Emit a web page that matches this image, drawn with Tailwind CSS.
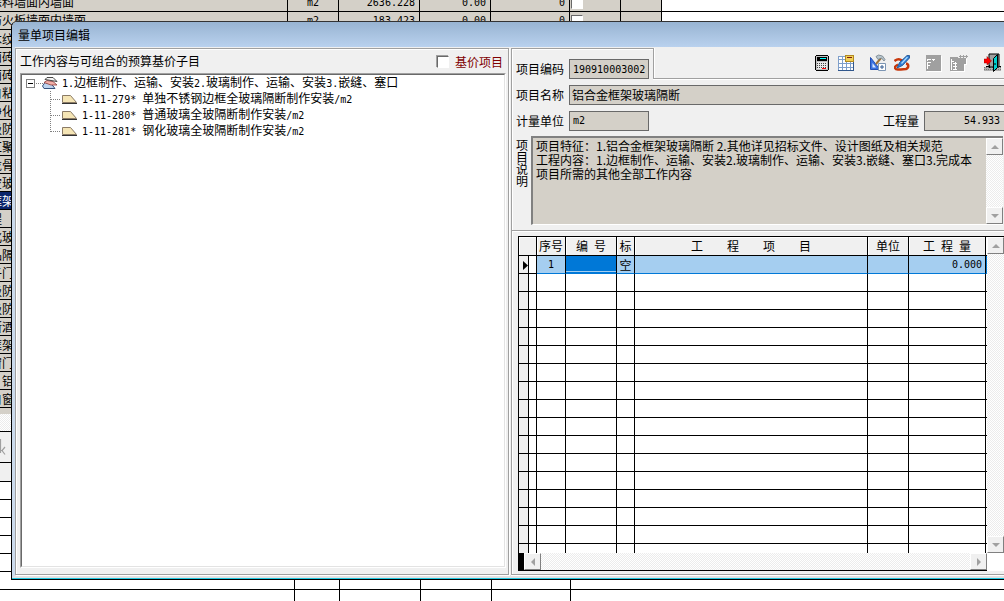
<!DOCTYPE html>
<html lang="zh-CN">
<head>
<meta charset="utf-8">
<title>量单项目编辑</title>
<script src="https://cdn.jsdelivr.net/npm/@tailwindcss/browser@4"></script>
</head>
<body class="relative h-screen overflow-hidden bg-white font-['Noto_Sans_CJK_SC',sans-serif] text-xs leading-4 text-black">

<!-- Main program behind the dialog -->
<main class="h-full overflow-hidden whitespace-nowrap">
  <table class="-mt-1.5 w-full table-fixed border-separate border-spacing-0 [&_td]:h-[18px] [&_td]:border-r [&_td]:border-b [&_td]:border-black [&_td]:bg-[#d4d0c8] [&_td]:p-0 [&_td]:leading-4">
    <colgroup><col class="w-[288px]"><col class="w-[51px]"><col class="w-[81px]"><col class="w-[71px]"><col class="w-[79px]"><col class="w-[51px]"><col class="w-[41px]"><col></colgroup>
    <tbody id="back">
      <tr class="font-['DejaVu_Sans_Mono','Noto_Sans_CJK_SC',monospace]"><td class="-indent-2.5">涂料墙面内墙面</td><td class="text-center text-[10px]">m2</td><td class="text-right text-[10px]"><span class="pr-1">2636.228</span></td><td class="text-right text-[10px]"><span class="pr-1">0.00</span></td><td class="text-right text-[10px]"><span class="pr-1">0</span></td><td><input type="checkbox" aria-label="选择第一行" class="ml-px block size-3 appearance-none border border-white border-t-[#696969] border-l-[#696969] bg-white"></td><td></td><td class="border-r-0! bg-white!"></td></tr>
      <tr class="font-['DejaVu_Sans_Mono','Noto_Sans_CJK_SC',monospace]"><td class="-indent-2.5">防火板墙面内墙面</td><td class="text-center text-[10px]">m2</td><td class="text-right text-[10px]"><span class="pr-1">183.423</span></td><td class="text-right text-[10px]"><span class="pr-1">0.00</span></td><td class="text-right text-[10px]"><span class="pr-1">0</span></td><td><input type="checkbox" aria-label="选择第二行" class="ml-px block size-3 appearance-none border border-white border-t-[#696969] border-l-[#696969] bg-white"></td><td></td><td class="border-r-0! bg-white!"></td></tr>
      <tr><td class="-indent-2.5">木纹</td></tr>
      <tr><td class="-indent-2.5">面砖</td></tr>
      <tr><td class="-indent-2.5">面砖</td></tr>
      <tr><td class="-indent-2.5">自粘</td></tr>
      <tr><td class="-indent-2.5">净化</td></tr>
      <tr><td class="-indent-2.5">级防</td></tr>
      <tr><td class="-indent-2.5">汇聚</td></tr>
      <tr><td class="-indent-2.5">龙骨</td></tr>
      <tr><td class="-indent-2.5">空玻璃</td></tr>
      <tr><td class="bg-[#0a246a]! -indent-2.5 text-white">框架</td></tr>
      <tr><td class="-indent-2.5">程</td></tr>
      <tr><td class="-indent-2.5">化玻</td></tr>
      <tr><td class="-indent-2.5">品隔</td></tr>
      <tr><td class="-indent-2.5">子门</td></tr>
      <tr><td class="-indent-2.5">级防</td></tr>
      <tr><td class="-indent-2.5">级防</td></tr>
      <tr><td class="-indent-2.5">断酒</td></tr>
      <tr><td class="-indent-2.5">框架</td></tr>
      <tr><td class="-indent-2.5">窗门</td></tr>
      <tr><td class="-indent-2.5">　铝</td></tr>
      <tr><td class="-indent-2.5">自窗</td></tr>
    </tbody>
  </table>
  <div class="h-1.5 bg-[#d4d0c8]"></div>
  <div class="h-[18px] border-b border-black bg-[repeating-conic-gradient(#fff_0_25%,#ececec_0_50%)] bg-[length:2px_2px]"></div>
  <div class="flex h-[31px] items-center border-b border-black bg-[#f0f0f0]">
    <svg class="h-5 w-1.5" viewBox="0 0 6 20" fill="none" stroke="#a0a0a0"><path d="M.5 2v14M5 10 2 13.500l3 4M1 13.500h2" stroke-width="1.200"/></svg>
  </div>
  <div class="h-[19px] border-b border-black bg-[#f0f0f0]"></div>
  <table class="w-full table-fixed border-separate border-spacing-0 [&_td]:h-[18px] [&_td]:border-r [&_td]:border-b [&_td]:border-black [&_td]:p-0">
    <colgroup><col class="w-[295px]"><col class="w-[45px]"><col class="w-[81px]"><col class="w-[71px]"><col class="w-[79px]"><col></colgroup>
    <tbody>
      <tr><td></td><td></td><td></td><td></td><td></td><td></td></tr>
      <tr><td></td><td></td><td></td><td></td><td></td><td></td></tr>
      <tr><td></td><td></td><td></td><td></td><td></td><td></td></tr>
      <tr><td></td><td></td><td></td><td></td><td></td><td></td></tr>
      <tr><td></td><td></td><td></td><td></td><td></td><td></td></tr>
      <tr><td></td><td></td><td></td><td></td><td></td><td class="border-r-0!"></td></tr>
      <tr><td></td><td></td><td></td><td></td><td></td><td class="border-r-0!"></td></tr>
    </tbody>
  </table>
</main>

<!-- Dialog window -->
<section role="dialog" aria-labelledby="dlg-title" class="absolute top-[21px] right-0 bottom-[21px] left-[11px] flex flex-col overflow-hidden rounded-tl-md border-t border-b border-l border-black border-t-[#333] bg-[#f0f0f0]">
  <header class="flex h-[25px] shrink-0 items-center bg-linear-to-b from-[#98b4d2] to-[#b9d1ee] pl-1.5">
    <h1 id="dlg-title" class="text-xs">量单项目编辑</h1>
  </header>
  <div class="flex min-h-0 flex-1 gap-0.5 border-b-[3px] border-l-[3px] border-b-[#e3e3e3] border-l-[#cbdaec] pt-px">

    <!-- Work content tree -->
    <div class="flex w-[494px] shrink-0 flex-col border border-[#a0a0a0] p-1 pt-0 pr-0.5 shadow-[1px_1px_0_#fff,inset_1px_1px_0_#fff]">
      <div class="flex h-6 items-center justify-between">
        <h2>工作内容与可组合的预算基价子目</h2>
        <label class="flex items-center gap-1.5 pt-0.5 pr-[3px] text-[#800000]"><input type="checkbox" class="size-3 appearance-none border border-white border-t-[#696969] border-l-[#696969] bg-white shadow-[-1px_-1px_0_#a0a0a0]">基价项目</label>
      </div>
      <div class="mb-0.5 flex-1 border border-white border-t-[#a0a0a0] border-l-[#a0a0a0] bg-white">
        <ul class="h-full border border-[#e3e3e3] border-t-[#696969] border-l-[#696969] font-['DejaVu_Sans_Mono','Noto_Sans_CJK_SC',monospace] leading-4 whitespace-nowrap">
          <li>
            <div class="flex h-4 items-center pl-1">
              <svg class="h-4 w-8 shrink-0" viewBox="0 0 32 16" shape-rendering="crispEdges"><rect x=".5" y="4.500" width="8" height="8" fill="#fff" stroke="#808080"/><path d="M2 8.500h5" stroke="#000"/><path d="M10 8.500h7" stroke="#808080" stroke-dasharray="1 1"/><g shape-rendering="auto"><path d="M16.500 11 19 7.500l6 1 4 5H18z" fill="#bcd4ef" stroke="#36527c"/><path d="m18 7.500 3-2 6 1 4 3.500h-6z" fill="#f3b0a8" stroke="#8d3b3b" stroke-width=".8"/><path d="m19 4.500 2-2h6l4 4-6-1z" fill="#f4f4f4" stroke="#333" stroke-width=".9"/></g></svg>
              <span class="pt-px pl-1"><span class="text-[10px]">1.</span>边框制作、运输、安装<span class="text-[10px]">2.</span>玻璃制作、运输、安装<span class="text-[10px]">3.</span>嵌缝、塞口</span>
            </div>
            <ul class="ml-7">
              <li class="flex h-4 items-center"><svg class="h-4 w-7 shrink-0" viewBox="0 0 28 16"><path d="M.5 0v16M1 8.500h10" stroke="#808080" stroke-dasharray="1 1"/><path d="M12.500 4.500h8l6 7h-14z" fill="#f5e5b5" stroke="#8b7b66"/><path d="M12 12.500h15" stroke="#333"/></svg><span class="pt-px pl-1"><span class="text-[10px]">1-11-279* </span>单独不锈钢边框全玻璃隔断制作安装<span class="text-[10px]">/m2</span></span></li>
              <li class="flex h-4 items-center"><svg class="h-4 w-7 shrink-0" viewBox="0 0 28 16"><path d="M.5 0v16M1 8.500h10" stroke="#808080" stroke-dasharray="1 1"/><path d="M12.500 4.500h8l6 7h-14z" fill="#f5e5b5" stroke="#8b7b66"/><path d="M12 12.500h15" stroke="#333"/></svg><span class="pt-px pl-1"><span class="text-[10px]">1-11-280* </span>普通玻璃全玻隔断制作安装<span class="text-[10px]">/m2</span></span></li>
              <li class="flex h-4 items-center"><svg class="h-4 w-7 shrink-0" viewBox="0 0 28 16"><path d="M.5 0v9M1 8.500h10" stroke="#808080" stroke-dasharray="1 1"/><path d="M12.500 4.500h8l6 7h-14z" fill="#f5e5b5" stroke="#8b7b66"/><path d="M12 12.500h15" stroke="#333"/></svg><span class="pt-px pl-1"><span class="text-[10px]">1-11-281* </span>钢化玻璃全玻隔断制作安装<span class="text-[10px]">/m2</span></span></li>
            </ul>
          </li>
        </ul>
      </div>
    </div>

    <!-- Item details -->
    <div class="flex min-w-0 flex-1 flex-col border-b border-l border-[#a0a0a0] shadow-[0_1px_0_#fff,inset_1px_0_0_#fff]">
      <div class="flex h-[31px] shrink-0">
        <div class="flex w-[141px] items-end gap-[5px] border-t border-[#a0a0a0] pl-1 shadow-[inset_0_1px_0_#fff]">
          <label for="code" class="pb-0.5 whitespace-nowrap">项目编码</label>
          <input id="code" value="190910003002" class="h-5 w-20 border border-[#696969] bg-[#d4d0c8] px-[3px] font-['DejaVu_Sans_Mono',monospace] text-[10px]">
        </div>
        <div class="flex flex-1 items-center justify-end gap-4 border-b border-l border-[#a0a0a0] pr-0.5 shadow-[inset_1px_0_0_#fff,0_1px_0_#fff]">
          <div class="flex gap-2">
            <button aria-label="计算器" class="h-5 w-4"><svg viewBox="0 0 16 20" shape-rendering="crispEdges"><path d="M2 2h12v1h1v14h-1v1H2v-1H1V3h1z"/><path d="M2 3h12v14H2z" fill="#c0c0c0"/><path d="M3 4h10v4H3z"/><path d="M6 5.500h6" stroke="#0ff"/><path d="M3 9h10v7H3z" fill="#e8e8e8"/><path d="M3 10.500h10M3 12.500h10M3 14.500h10" stroke="#444" stroke-dasharray="1 1"/><path d="M8 15.500h4" stroke="red"/></svg></button>
            <button aria-label="表格" class="h-5 w-4"><svg viewBox="0 0 16 20" shape-rendering="crispEdges"><path d="M0 3h16v15H0z" fill="#fff"/><path d="M0 3.500h16M0 6.500h16M0 10.500h16M0 14.500h16M.5 3v14M4.500 3v14M8.500 3v14M12.500 3v14" stroke="#7f9fca" fill="none"/><path d="M0 17.500h16M15.500 7v11" stroke="#31578c"/><path d="M7.500 2.500h8v6h-8z" fill="#f1cf58" stroke="#b18a20"/><path d="M9 4.500h5" stroke="#7b1c10"/></svg></button>
          </div>
          <div class="flex gap-2">
            <button aria-label="设计工具" class="h-5 w-4"><svg viewBox="0 0 16 20"><path d="M.5 4.500v12H10z" fill="#3c72e0" stroke="#2450b4"/><path d="M2.500 10v4.500H6z" fill="#dbe9ff"/><path d="m6 11 5-6" stroke="#a1743a" stroke-width="2"/><path d="M6 3.500 8.500 2l4 1L15 6.500 14 8l-2.500-3L8 6.500z" fill="#b9c6cd" stroke="#63727c" stroke-width=".7"/><path d="M8.500 10.500h7v7h-7z" fill="#fff" stroke="#7c95b3"/><path d="M12 12v4m-2-2h4" stroke="#345d91"/></svg></button>
            <button aria-label="编辑" class="h-5 w-4"><svg viewBox="0 0 16 20"><path d="M.5 8C3 6 6 6 8 7.500M4 11.500C-1 14 1 17 5 16.500c3 0 5-.5 7-.5 3-1 3-5 0-5.500" fill="none" stroke="#c8380c" stroke-width="2.500"/><path d="M15.500 2.500 13 2.500 5.500 9.500 3 15l5.500-2.500 7-7.500z" fill="#2e7bd3" stroke="#174b8b" stroke-width=".8"/><path d="m13.500 4-6 6.500" stroke="#a9dcff" stroke-width="1.300"/></svg></button>
          </div>
          <div class="flex gap-2">
            <button disabled aria-label="展开" class="h-5 w-4"><svg viewBox="0 0 16 20" shape-rendering="crispEdges"><path d="M1 3h15v16H1z" fill="#fff"/><path d="M0 2h15v16H0z" fill="#a0a0a0"/><path d="M1 6.500h4M6 6.500h3M7.500 6v2M1.500 6v2M1 9.500h4M1.500 9v7M1 12.500h3" stroke="#fff"/></svg></button>
            <button disabled aria-label="汇总" class="h-5 w-[18px]"><svg viewBox="0 0 18 20" shape-rendering="crispEdges"><path d="M1 5h8v1h8v6h-2v7H1z" fill="#fff"/><path d="M0 4h8v1h8v6h-2v7H0z" fill="#a0a0a0"/><path d="M9 3.500h9M10.500 2v3M13.500 2v3M16.500 2v3" stroke="#a0a0a0"/><path d="M1.500 6v11M2 8.500h2M3 10.500h4M3 13.500h4M3 16.500h4M5.500 9v8" stroke="#fff"/></svg></button>
          </div>
          <button aria-label="退出" class="h-5 w-[18px]"><svg viewBox="0 0 18 20"><path d="M0 14h17v4H0z" fill="#b0b0b0"/><path d="M0 14.500h17M0 16.500h17" stroke="#777" stroke-dasharray="1 1"/><path d="M5 1h10v13H5z" fill="#a0a0a0" stroke="#000"/><path d="M2 13.500h4M15 13.500h2M5.500 12v3" stroke="#000"/><path d="M9.500 5.500 13.500 1.500v13l-4 4z" fill="#00cfcf" stroke="#000"/><path d="M11 10v2" stroke="#000"/><path d="M0 6h3V3.500L7.500 8 3 12V10H0z" fill="red" stroke="#900" stroke-width=".5"/></svg></button>
        </div>
      </div>

      <div class="mt-1.5 flex h-5 shrink-0 gap-[5px] overflow-hidden pl-1">
        <label for="name" class="pt-0.5 whitespace-nowrap">项目名称</label>
        <input id="name" value="铝合金框架玻璃隔断" class="-mr-0.5 h-5 min-w-0 flex-1 border border-[#696969] bg-[#d4d0c8] px-[2px] pb-0.5">
      </div>
      <div class="mt-1.5 flex h-5 shrink-0 gap-[5px] overflow-hidden pl-1">
        <label for="unit" class="pt-0.5 whitespace-nowrap">计量单位</label>
        <input id="unit" value="m2" class="h-5 w-20 border border-[#696969] bg-[#d4d0c8] px-[3px] pb-0.5 font-['DejaVu_Sans_Mono',monospace] text-[10px]">
        <label for="qty" class="ml-auto pt-0.5 whitespace-nowrap">工程量</label>
        <input id="qty" value="54.933" class="-mr-0.5 h-5 w-[82px] border border-[#696969] bg-[#d4d0c8] pr-[5px] pb-0.5 text-right font-['DejaVu_Sans_Mono',monospace] text-[10px]">
      </div>

      <div class="mt-[5px] flex h-[89px] shrink-0 pr-px pl-1">
        <label for="desc" class="mr-[3px] w-3 pt-[3px] leading-3 break-all">项目说明</label>
        <div class="flex min-w-0 flex-1 border-t-2 border-b border-l-2 border-[#808080] border-b-white">
          <textarea id="desc" class="block min-w-0 flex-1 resize-none overflow-hidden bg-[#d4d0c8] pt-px pr-1 pl-[3px] leading-[14px]">项目特征：1.铝合金框架玻璃隔断 2.其他详见招标文件、设计图纸及相关规范
工程内容：1.边框制作、运输、安装2.玻璃制作、运输、安装3.嵌缝、塞口3.完成本项目所需的其他全部工作内容</textarea>
          <div class="flex w-[17px] flex-col justify-between bg-[repeating-conic-gradient(#fff_0_25%,#ececec_0_50%)] bg-[length:2px_2px]">
            <button aria-label="说明向上滚动" class="flex h-[17px] items-center justify-center border border-[#808080] border-t-white border-l-white bg-[#f0f0f0]"><svg class="h-1 w-2" viewBox="0 0 8 4"><path d="m0 4 4-4 4 4z" fill="#a0a0a0"/></svg></button>
            <button aria-label="说明向下滚动" class="flex h-[17px] items-center justify-center border border-[#808080] border-t-white border-l-white bg-[#f0f0f0]"><svg class="h-1 w-2" viewBox="0 0 8 4"><path d="m0 0 4 4 4-4z" fill="#a0a0a0"/></svg></button>
          </div>
        </div>
      </div>

      <div class="mt-[5px] mb-1 h-0.5 shrink-0 border-t border-b border-[#a0a0a0] border-b-white"></div>

      <!-- Quota grid -->
      <div class="mb-[3px] ml-1.5 flex min-h-0 flex-1 border-t border-black">
        <div class="flex min-w-0 flex-1 flex-col border-b border-l border-black">
          <div class="min-h-0 flex-1 overflow-hidden bg-white">
            <table class="w-full table-fixed border-separate border-spacing-0 [&_td]:h-[18px] [&_td]:border-r [&_td]:border-b [&_td]:border-black [&_td]:p-0 [&_td]:leading-4 [&_td:first-child]:bg-[#f0f0f0] [&_th]:h-[19px] [&_th]:border-r [&_th]:border-b [&_th]:border-black [&_th]:bg-[#f0f0f0] [&_th]:p-0 [&_th]:leading-4 [&_th]:font-normal [&_th]:shadow-[inset_1px_1px_0_#fff]">
              <colgroup><col class="w-[10px]"><col class="w-2"><col class="w-[29px]"><col class="w-[51px]"><col class="w-[18px]"><col><col class="w-[41px]"><col class="w-[77px]"><col class="w-px"></colgroup>
              <thead><tr><th colspan="2" aria-label="行标"></th><th>序号</th><th><span class="inline-flex gap-1.5"><span>编</span><span>号</span></span></th><th>标</th><th><span class="inline-flex gap-6"><span>工</span><span>程</span><span>项</span><span>目</span></span></th><th>单位</th><th><span class="inline-flex gap-1.5"><span>工</span><span>程</span><span>量</span></span></th><td class="h-[19px]! border-r-0! bg-white"></td></tr></thead>
              <tbody id="grid">
                <tr class="[&_td:nth-child(n+3)]:border-b-[#0078d7] [&_td:nth-child(n+3)]:bg-[#a5cef0]">
                  <td><svg class="ml-auto h-2.5 w-[5px]" viewBox="0 0 5 10"><path d="M0 1v9l5-4.500z"/></svg></td><td></td>
                  <td class="text-center font-['DejaVu_Sans_Mono',monospace] text-[10px]">1</td>
                  <td class="bg-[#0078d7]! shadow-[inset_0_-1px_0_#0078d7,inset_0_-2px_0_#a5cef0]"></td>
                  <td class="text-center">空</td><td></td><td></td>
                  <td class="text-right font-['DejaVu_Sans_Mono',monospace] text-[10px]"><span class="pr-[3px]">0.000</span></td>
                  <td class="border-r-0! bg-[#0078d7]!"></td>
                </tr>
              </tbody>
            </table>
          </div>
          <div class="flex h-[17px] shrink-0 justify-between border-l-[5px] border-black bg-[repeating-conic-gradient(#fff_0_25%,#ececec_0_50%)] bg-[length:2px_2px]">
            <button aria-label="向左滚动" class="flex w-[17px] items-center justify-center border border-[#808080] border-t-white border-l-white bg-[#f0f0f0]"><svg class="h-2 w-1" viewBox="0 0 4 8"><path d="M4 0 0 4l4 4z" fill="#a0a0a0"/></svg></button>
            <button aria-label="向右滚动" class="flex w-[17px] items-center justify-center border border-[#808080] border-t-white border-l-white bg-[#f0f0f0]"><svg class="h-2 w-1" viewBox="0 0 4 8"><path d="m0 0 4 4-4 4z" fill="#a0a0a0"/></svg></button>
          </div>
        </div>
        <div class="flex w-[17px] flex-col">
          <div class="flex flex-1 flex-col justify-between bg-[repeating-conic-gradient(#fff_0_25%,#ececec_0_50%)] bg-[length:2px_2px]">
            <button aria-label="向上滚动" class="flex h-[17px] items-center justify-center border border-[#808080] border-t-white border-l-white bg-[#f0f0f0]"><svg class="h-1 w-2" viewBox="0 0 8 4"><path d="m0 4 4-4 4 4z" fill="#a0a0a0"/></svg></button>
            <button aria-label="向下滚动" class="flex h-[17px] items-center justify-center border border-[#808080] border-t-white border-l-white bg-[#f0f0f0]"><svg class="h-1 w-2" viewBox="0 0 8 4"><path d="m0 0 4 4 4-4z" fill="#a0a0a0"/></svg></button>
          </div>
          <div class="h-[18px] bg-white"></div>
        </div>
      </div>
    </div>
  </div>
  <div class="h-px shrink-0 bg-[#22c7e0]"></div>
</section>

<script>
  // Fill the rest of the quota grid with blank rows.
  const grid = document.getElementById('grid');
  for (let i = 0; i < 16; i++) {
    const row = grid.insertRow();
    for (let c = 0; c < 9; c++) row.insertCell();
    row.lastChild.style.borderRight = '0';
  }
</script>
</body>
</html>
